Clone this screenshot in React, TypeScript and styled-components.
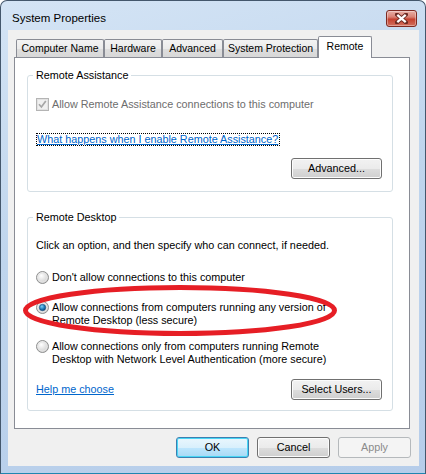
import React from 'react';
import styled, { createGlobalStyle } from 'styled-components';

const GlobalStyle = createGlobalStyle`
  html, body {
    margin: 0;
    padding: 0;
    background: #ffffff;
  }
  body {
    font-family: "Liberation Sans", Arial, sans-serif;
    font-size: 10.8px;
    color: #000;
  }
  * {
    box-sizing: border-box;
  }
`;

const Window = styled.div`
  position: relative;
  width: 426px;
  height: 474px;
  display: flex;
  flex-direction: column;
  padding: 0 6px 7px 7px;
  border: 1px solid #44576c;
  border-bottom-color: #1f86b0;
  border-radius: 7px 7px 0 0;
  background: linear-gradient(165deg, #d4e4f5 0%, #bfd5ed 45%, #b6cdea 100%);
`;

const TitleBar = styled.div`
  height: 29px;
  display: flex;
  align-items: center;
  justify-content: space-between;
  padding: 6px 2px 0 4px;
`;

const Title = styled.span`
  font-size: 11.5px;
  line-height: 15px;
  color: #000;
`;

const CloseButton = styled.div`
  width: 31px;
  height: 17px;
  display: flex;
  align-items: center;
  justify-content: center;
  border: 1px solid #7e2a22;
  border-radius: 3px;
  background: linear-gradient(#e8b0a7 0%, #d98275 40%, #c5412f 55%, #d2705f 100%);
  box-shadow: inset 0 0 0 1px rgba(255, 255, 255, 0.35);
`;

const Client = styled.div`
  flex: 1;
  display: flex;
  flex-direction: column;
  background: #f0f0f0;
  padding: 6px 9px 8px 6px;
`;

const TabStrip = styled.div`
  height: 21px;
  display: flex;
  align-items: flex-end;
  padding-left: 2px;
`;

const Tab = styled.div<{ $w: number; $active?: boolean }>`
  position: relative;
  width: ${(p) => p.$w}px;
  height: ${(p) => (p.$active ? 22 : 18)}px;
  margin-bottom: ${(p) => (p.$active ? -1 : 0)}px;
  z-index: ${(p) => (p.$active ? 1 : 0)};
  border: 1px solid #898c95;
  border-bottom: none;
  border-radius: 2px 2px 0 0;
  background: ${(p) =>
    p.$active ? '#ffffff' : 'linear-gradient(#f3f3f3 0%, #ebebeb 50%, #dedede 51%, #d8d8d8 100%)'};
  text-align: center;
  font-size: 10.5px;
  line-height: ${(p) => (p.$active ? 19 : 17)}px;
  white-space: nowrap;
`;

const Panel = styled.div`
  height: 372px;
  display: flex;
  flex-direction: column;
  background: #ffffff;
  border: 1px solid #898c95;
  padding: 17px 16px 0 12px;
`;

const Group = styled.div<{ $pad: string; $mt?: number }>`
  position: relative;
  display: flex;
  flex-direction: column;
  margin-top: ${(p) => p.$mt ?? 0}px;
  padding: ${(p) => p.$pad};
  border: 1px solid #d5dfe5;
  border-radius: 3px;
`;

const Legend = styled.span`
  position: absolute;
  top: -7px;
  left: 5px;
  padding: 0 3px;
  background: #ffffff;
  line-height: 13px;
`;

const Text = styled.div<{ $mt?: number }>`
  margin-top: ${(p) => p.$mt ?? 0}px;
  line-height: 13px;
  white-space: nowrap;
`;

const OptionRow = styled.div<{ $mt?: number; $disabled?: boolean }>`
  display: flex;
  align-items: flex-start;
  gap: 3px;
  margin-top: ${(p) => p.$mt ?? 0}px;
  line-height: 13px;
  white-space: nowrap;
  color: ${(p) => (p.$disabled ? '#6d6d6d' : '#000')};
  svg {
    flex: none;
  }
`;

const FocusLink = styled.a<{ $mt?: number }>`
  align-self: flex-start;
  margin-top: ${(p) => p.$mt ?? 0}px;
  padding: 0 1px 0 0;
  line-height: 11px;
  height: 13px;
  border: 1px dotted #000;
  color: #0066cc;
  text-decoration: underline;
  white-space: nowrap;
`;

const Link = styled.a`
  color: #0066cc;
  text-decoration: underline;
  line-height: 13px;
`;

const ButtonRow = styled.div<{ $mt?: number; $spread?: boolean }>`
  display: flex;
  align-items: center;
  justify-content: ${(p) => (p.$spread ? 'space-between' : 'flex-end')};
  margin-top: ${(p) => p.$mt ?? 0}px;
`;

const Button = styled.button<{ $w: number; $kind?: 'default' | 'disabled' }>`
  width: ${(p) => p.$w}px;
  height: 21px;
  padding: 0;
  font: inherit;
  line-height: 17px;
  color: ${(p) => (p.$kind === 'disabled' ? '#8b8b8b' : '#000')};
  border-radius: 3px;
  border: 1px solid
    ${(p) => (p.$kind === 'default' ? '#3c7fb1' : p.$kind === 'disabled' ? '#b5b9bc' : '#707070')};
  background: ${(p) =>
    p.$kind === 'default'
      ? 'linear-gradient(#eaf6fd 0%, #d9f0fc 50%, #bee6fd 51%, #a7d9f5 100%)'
      : p.$kind === 'disabled'
      ? '#f4f4f4'
      : 'linear-gradient(#f2f2f2 0%, #ebebeb 50%, #dddddd 51%, #cfcfcf 100%)'};
  box-shadow: ${(p) =>
    p.$kind === 'default'
      ? 'inset 0 0 0 1px #48d6f5'
      : p.$kind === 'disabled'
      ? 'none'
      : 'inset 0 0 0 1px #fcfcfc'};
`;

const DialogButtons = styled.div`
  display: flex;
  justify-content: flex-end;
  gap: 8px;
  margin-top: 8px;
  margin-right: -1px;
`;

const Annotation = styled.svg`
  position: absolute;
  left: 20px;
  top: 282px;
  pointer-events: none;
`;

const CloseGlyph = () => (
  <svg width="13" height="11" viewBox="0 0 13 11">
    <path d="M2 1.5 L11 9.5 M11 1.5 L2 9.5" stroke="#6b2a22" strokeWidth="4" strokeLinecap="square" />
    <path d="M2.3 1.8 L10.7 9.2 M10.7 1.8 L2.3 9.2" stroke="#ffffff" strokeWidth="2.2" />
  </svg>
);

const DisabledCheck = () => (
  <svg width="13" height="13" viewBox="0 0 13 13">
    <rect x="0.5" y="0.5" width="12" height="12" fill="#f4f4f4" stroke="#b4b4b4" />
    <rect x="1.5" y="1.5" width="10" height="10" fill="#f0f0f0" stroke="#e2e2e2" />
    <path d="M3 6.3 L5.4 9 L9.8 3" stroke="#a6a6a6" strokeWidth="1.7" fill="none" />
  </svg>
);

const Radio = ({ checked }: { checked?: boolean }) => (
  <svg width="13" height="13" viewBox="0 0 13 13">
    <defs>
      <radialGradient id="radioFace" cx="0.4" cy="0.35" r="0.75">
        <stop offset="0" stopColor="#ffffff" />
        <stop offset="1" stopColor="#c6c6c6" />
      </radialGradient>
      <radialGradient id="radioDot" cx="0.4" cy="0.35" r="0.7">
        <stop offset="0" stopColor="#7fd0f5" />
        <stop offset="0.6" stopColor="#1c78b8" />
        <stop offset="1" stopColor="#0b3f70" />
      </radialGradient>
    </defs>
    <circle cx="6.5" cy="6.5" r="6" fill="url(#radioFace)" stroke="#8e8f8f" />
    <circle cx="6.5" cy="6.5" r="4.5" fill="none" stroke="#e6e6e6" />
    {checked && <circle cx="6.5" cy="6.5" r="3.2" fill="url(#radioDot)" stroke="#1b4f7e" strokeWidth="0.6" />}
  </svg>
);

const tabs = [
  { label: 'Computer Name', w: 88 },
  { label: 'Hardware', w: 58 },
  { label: 'Advanced', w: 61 },
  { label: 'System Protection', w: 95 },
  { label: 'Remote', w: 54, active: true },
];

const App: React.FC = () => {
  return (
    <>
      <GlobalStyle />
      <Window>
        <TitleBar>
          <Title>System Properties</Title>
          <CloseButton>
            <CloseGlyph />
          </CloseButton>
        </TitleBar>
        <Client>
          <TabStrip>
            {tabs.map((t) => (
              <Tab key={t.label} $w={t.w} $active={t.active}>
                {t.label}
              </Tab>
            ))}
          </TabStrip>
          <Panel>
            <Group $pad="22px 10px 12px 8px">
              <Legend>Remote Assistance</Legend>
              <OptionRow $disabled>
                <DisabledCheck />
                <span>Allow Remote Assistance connections to this computer</span>
              </OptionRow>
              <FocusLink href="#" $mt={22}>
                What happens when I enable Remote Assistance?
              </FocusLink>
              <ButtonRow $mt={12}>
                <Button $w={91}>Advanced...</Button>
              </ButtonRow>
            </Group>
            <Group $pad="21px 10px 10px 8px" $mt={25}>
              <Legend>Remote Desktop</Legend>
              <Text>Click an option, and then specify who can connect, if needed.</Text>
              <OptionRow $mt={19}>
                <Radio />
                <span>Don't allow connections to this computer</span>
              </OptionRow>
              <OptionRow $mt={17}>
                <Radio checked />
                <span>
                  Allow connections from computers running any version of
                  <br />
                  Remote Desktop (less secure)
                </span>
              </OptionRow>
              <OptionRow $mt={13}>
                <Radio />
                <span>
                  Allow connections only from computers running Remote
                  <br />
                  Desktop with Network Level Authentication (more secure)
                </span>
              </OptionRow>
              <ButtonRow $mt={13} $spread>
                <Link href="#">Help me choose</Link>
                <Button $w={91}>Select Users...</Button>
              </ButtonRow>
            </Group>
          </Panel>
          <DialogButtons>
            <Button $w={73} $kind="default">OK</Button>
            <Button $w={73}>Cancel</Button>
            <Button $w={73} $kind="disabled">Apply</Button>
          </DialogButtons>
        </Client>
        <Annotation width="320" height="56" viewBox="0 0 320 56">
          <ellipse cx="159" cy="27.5" rx="154.5" ry="23" fill="none" stroke="#e61e25" strokeWidth="5" />
        </Annotation>
      </Window>
    </>
  );
};

export default App;
